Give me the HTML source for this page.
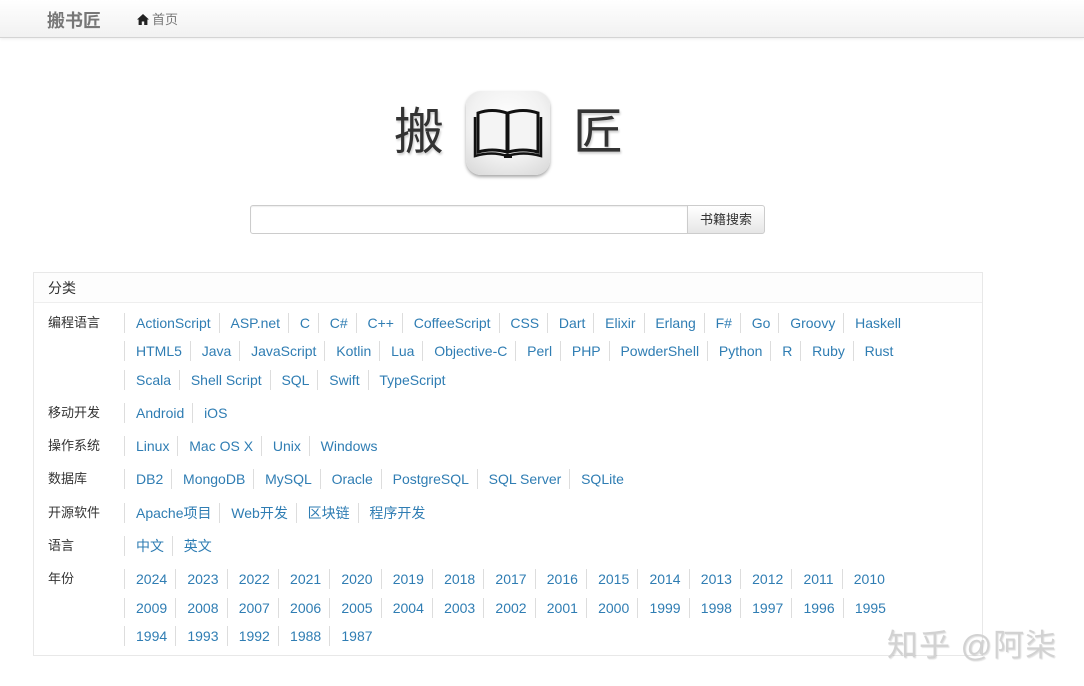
<!DOCTYPE html>
<html><head><meta charset="utf-8">
<style>
*{margin:0;padding:0;box-sizing:border-box}
body{width:1084px;height:686px;overflow:hidden;background:#fff;font-family:"Liberation Sans","Noto Sans CJK SC",sans-serif;position:relative;color:#333}
.nav{position:absolute;left:0;top:0;width:1084px;height:38px;background:linear-gradient(#fff,#f1f1f1);border-bottom:1px solid #d4d4d4;box-shadow:0 1px 3px rgba(0,0,0,.08)}
.brand{position:absolute;left:47px;top:7px;font-size:18px;font-weight:bold;color:#777;letter-spacing:0}
.home{position:absolute;left:137px;top:9px;font-size:13px;color:#777}
.home svg{vertical-align:-1px;margin-right:3px}
.big{position:absolute;font-size:50px;color:#333;top:102px;line-height:60px;text-shadow:1px 2px 2px rgba(0,0,0,.2)}
.logo{position:absolute;left:466px;top:91px;width:84px;height:84px;border-radius:15px;background:radial-gradient(circle at 50% 35%,#fff 0%,#f1f1f1 55%,#d6d6d6 100%);box-shadow:0 2px 3px rgba(0,0,0,.35)}
.inp{position:absolute;left:250px;top:205px;width:438px;height:29px;border:1px solid #ccc;border-radius:3px 0 0 3px;box-shadow:inset 0 1px 1px rgba(0,0,0,.07)}
.btn{position:absolute;left:687px;top:205px;width:78px;height:29px;border:1px solid #ccc;border-radius:0 3px 3px 0;background:linear-gradient(#fff,#e6e6e6);font-size:13px;text-align:center;line-height:27px;color:#333}
.panel{position:absolute;left:33px;top:272px;width:950px;height:384px;border:1px solid #e8e8e8}
.ph{height:30px;border-bottom:1px solid #eee;background:#fdfdfd;font-size:14px;padding-left:14px;line-height:30px}
.lab{position:absolute;left:48px;font-size:13px;line-height:28px;color:#333}
.row{position:absolute;left:124px;font-size:14px;line-height:20px;white-space:nowrap}
.row a{display:inline-block;color:#2f7db3;text-decoration:none;border-left:1px solid #ddd;padding:0 8px 0 10.8px;margin-right:0}
.row.yr a{padding:0 8.2px 0 11px}
.row a:first-child{padding-left:11px}
.wm{position:absolute;left:887px;top:620px;font-size:31px;color:#d2d2d2;letter-spacing:1px;text-shadow:1px 1px 1px rgba(0,0,0,.12)}
</style></head><body>
<div class="nav"><div class="brand">搬书匠</div>
<div class="home"><svg width="12" height="11" viewBox="0 0 12 11"><path d="M6 0L0 5.5h1.6V11h3.2V7.5h2.4V11h3.2V5.5H12z" fill="#222"/></svg>首页</div></div>
<div class="big" style="left:394px">搬</div>
<div class="logo"><svg width="84" height="84" viewBox="0 0 84 84">
<path d="M12 22 Q26 17 41 22 L41 61 Q26 57 12 61Z" fill="#f4f4f4" stroke="#111" stroke-width="3"/>
<path d="M72 22 Q57 17 42 22 L42 61 Q57 57 72 61Z" fill="#f4f4f4" stroke="#111" stroke-width="3"/>
<path d="M9 26 L9 65 Q26 60 41 65 Q57 60 75 65 L75 26" fill="none" stroke="#111" stroke-width="2.5"/>
<rect x="38" y="63" width="8" height="4" fill="#111"/></svg></div>
<div class="big" style="left:573px">匠</div>
<div class="inp"></div><div class="btn">书籍搜索</div>
<div class="panel"><div class="ph">分类</div></div>

<div class="lab" style="top:309px">编程语言</div>
<div class="row" style="top:313px"><a>ActionScript</a><a>ASP.net</a><a>C</a><a>C#</a><a>C++</a><a>CoffeeScript</a><a>CSS</a><a>Dart</a><a>Elixir</a><a>Erlang</a><a>F#</a><a>Go</a><a>Groovy</a><a>Haskell</a></div>
<div class="row" style="top:341px"><a>HTML5</a><a>Java</a><a>JavaScript</a><a>Kotlin</a><a>Lua</a><a>Objective-C</a><a>Perl</a><a>PHP</a><a>PowderShell</a><a>Python</a><a>R</a><a>Ruby</a><a>Rust</a></div>
<div class="row" style="top:370px"><a>Scala</a><a>Shell Script</a><a>SQL</a><a>Swift</a><a>TypeScript</a></div>
<div class="lab" style="top:399px">移动开发</div>
<div class="row" style="top:403px"><a>Android</a><a>iOS</a></div>
<div class="lab" style="top:432px">操作系统</div>
<div class="row" style="top:436px"><a>Linux</a><a>Mac OS X</a><a>Unix</a><a>Windows</a></div>
<div class="lab" style="top:465px">数据库</div>
<div class="row" style="top:469px"><a>DB2</a><a>MongoDB</a><a>MySQL</a><a>Oracle</a><a>PostgreSQL</a><a>SQL Server</a><a>SQLite</a></div>
<div class="lab" style="top:499px">开源软件</div>
<div class="row" style="top:503px"><a>Apache项目</a><a>Web开发</a><a>区块链</a><a>程序开发</a></div>
<div class="lab" style="top:532px">语言</div>
<div class="row" style="top:536px"><a>中文</a><a>英文</a></div>
<div class="lab" style="top:565px">年份</div>
<div class="row yr" style="top:569px"><a>2024</a><a>2023</a><a>2022</a><a>2021</a><a>2020</a><a>2019</a><a>2018</a><a>2017</a><a>2016</a><a>2015</a><a>2014</a><a>2013</a><a>2012</a><a>2011</a><a>2010</a></div>
<div class="row yr" style="top:598px"><a>2009</a><a>2008</a><a>2007</a><a>2006</a><a>2005</a><a>2004</a><a>2003</a><a>2002</a><a>2001</a><a>2000</a><a>1999</a><a>1998</a><a>1997</a><a>1996</a><a>1995</a></div>
<div class="row yr" style="top:626px"><a>1994</a><a>1993</a><a>1992</a><a>1988</a><a>1987</a></div>
<div class="wm">知乎 @阿柒</div>
</body></html>
